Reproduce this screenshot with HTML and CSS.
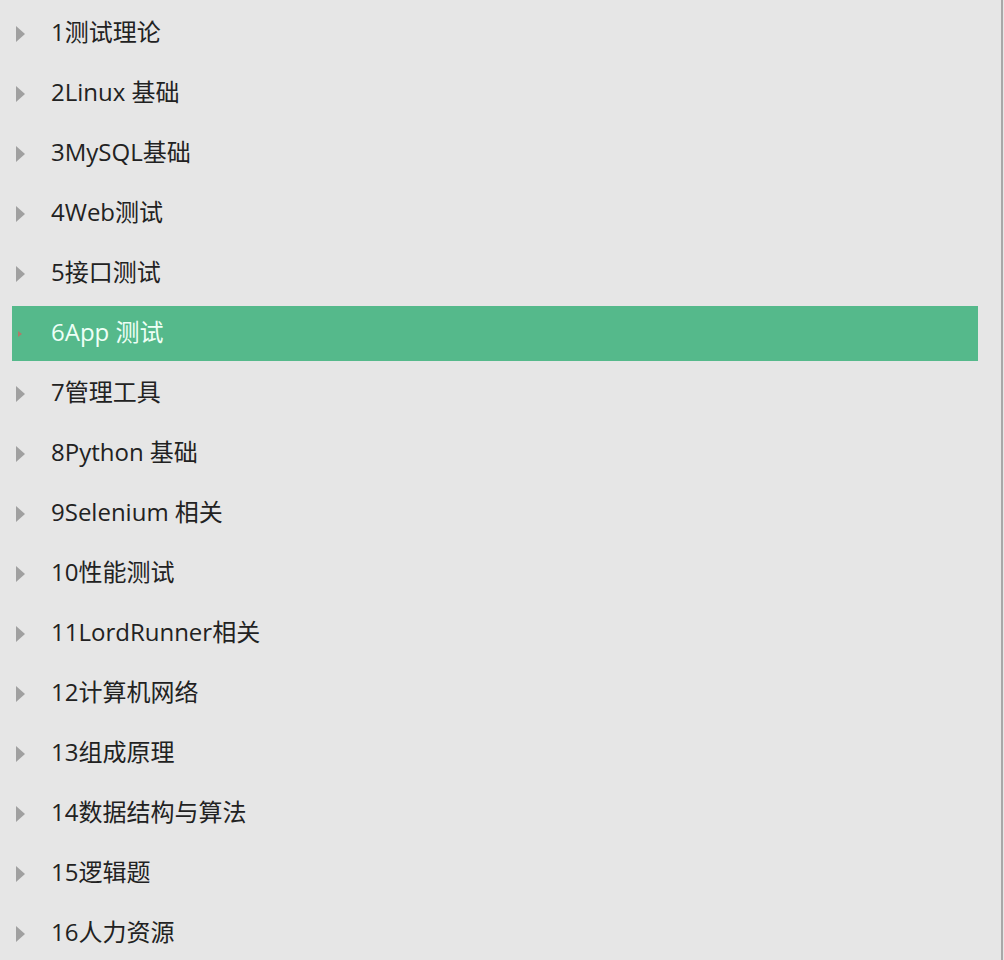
FILE: index.html
```html
<!DOCTYPE html>
<html>
<head>
<meta charset="utf-8">
<link rel="stylesheet" href="styles.css">
</head>
<body>
<div class="panel">
  <ul class="tree">
    <li class="item"><div class="row"><span class="arrow"></span><span class="label">1测试理论</span></div></li>
    <li class="item"><div class="row"><span class="arrow"></span><span class="label">2Linux 基础</span></div></li>
    <li class="item"><div class="row"><span class="arrow"></span><span class="label">3MySQL基础</span></div></li>
    <li class="item"><div class="row"><span class="arrow"></span><span class="label">4Web测试</span></div></li>
    <li class="item"><div class="row"><span class="arrow"></span><span class="label">5接口测试</span></div></li>
    <li class="item"><div class="row active"><span class="arrow"></span><span class="label">6App 测试</span></div></li>
    <li class="item"><div class="row"><span class="arrow"></span><span class="label">7管理工具</span></div></li>
    <li class="item"><div class="row"><span class="arrow"></span><span class="label">8Python 基础</span></div></li>
    <li class="item"><div class="row"><span class="arrow"></span><span class="label">9Selenium 相关</span></div></li>
    <li class="item"><div class="row"><span class="arrow"></span><span class="label">10性能测试</span></div></li>
    <li class="item"><div class="row"><span class="arrow"></span><span class="label">11LordRunner相关</span></div></li>
    <li class="item"><div class="row"><span class="arrow"></span><span class="label">12计算机网络</span></div></li>
    <li class="item"><div class="row"><span class="arrow"></span><span class="label">13组成原理</span></div></li>
    <li class="item"><div class="row"><span class="arrow"></span><span class="label">14数据结构与算法</span></div></li>
    <li class="item"><div class="row"><span class="arrow"></span><span class="label">15逻辑题</span></div></li>
    <li class="item"><div class="row"><span class="arrow"></span><span class="label">16人力资源</span></div></li>
  </ul>
</div>
</body>
</html>
```
FILE: styles.css
```css
html, body {
  margin: 0;
  padding: 0;
  background: #e6e6e6;
}
.panel {
  width: 1001px;
  height: 960px;
  border-right: 2px solid #a8a8a8;
  box-sizing: content-box;
  background: #e6e6e6;
  overflow: hidden;
}
.tree {
  list-style: none;
  margin: 0;
  padding: 3px 0 0 0;
}
.item {
  height: 60px;
  padding: 3px 0 2px 12px;
  box-sizing: border-box;
  width: 978px;
}
.row {
  height: 55px;
  display: flex;
  align-items: center;
  font-family: "Open Sans", "Noto Sans CJK SC", sans-serif;
  font-size: 24px;
  color: #222;
}
.arrow {
  flex: none;
  width: 0;
  height: 0;
  margin-left: 4px;
  margin-top: 0;
  border-top: 8px solid transparent;
  border-bottom: 8px solid transparent;
  border-left: 9px solid #a0a0a0;
}
.label {
  margin-left: 26px;
  padding-bottom: 3px;
  line-height: 30px;
}
.row.active {
  background: #55b98b;
  color: #eefff6;
}
.row.active .arrow {
  margin-left: 6px;
  border-top-width: 3px;
  border-bottom-width: 3px;
  border-left-width: 4px;
  border-left-color: #b07a6a;
}
.row.active .label {
  margin-left: 29px;
}
```
